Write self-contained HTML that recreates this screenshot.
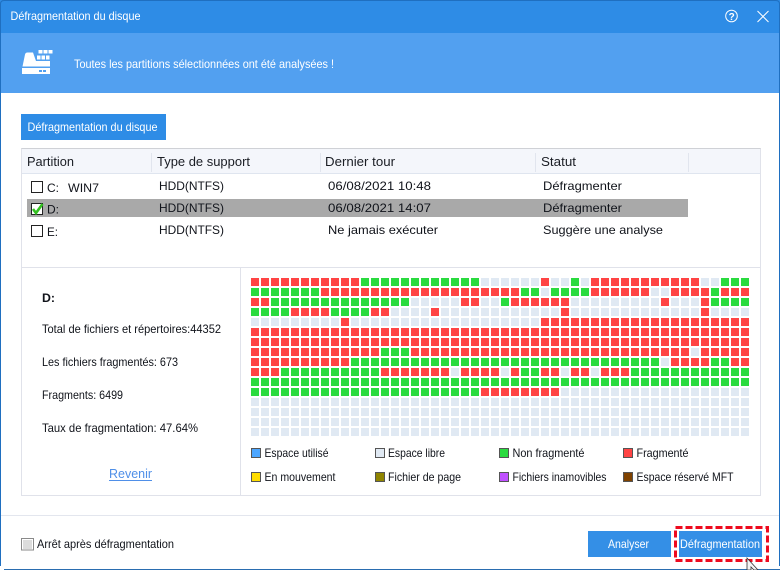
<!DOCTYPE html>
<html><head><meta charset="utf-8"><title>Défragmentation du disque</title>
<style>
html,body{margin:0;padding:0;background:#fff;width:780px;height:570px;overflow:hidden}
svg{display:block;position:absolute;left:0;top:0}
text{font-family:"Liberation Sans",sans-serif;font-size:12px;fill:#10131a}
.w{fill:#fff}
.h{font-size:13px;fill:#1a1d24}
</style></head><body>
<svg width="780" height="570" viewBox="0 0 780 570" xmlns="http://www.w3.org/2000/svg">
<rect width="780" height="570" fill="#fff"/>
<!-- title + banner -->
<rect x="0" y="0" width="780" height="33" fill="#2e8ce6"/>
<rect x="0" y="33" width="780" height="60" fill="#52a0f0"/>
<!-- window border -->
<path d="M0.5 566V4Q0.5 0.5 4 0.5H776Q779.5 .5 779.5 4V566" fill="none" stroke="#1f6fc0"/>
<path d="M4 569.5H747" stroke="#2a6db0" fill="none"/>
<path d="M758 569.5H780" stroke="#2a6db0" fill="none"/>
<text x="10.5" y="20" class="w" textLength="130" lengthAdjust="spacingAndGlyphs">Défragmentation du disque</text>
<!-- help + close -->
<circle cx="731.5" cy="16" r="5.8" fill="none" stroke="#fff" stroke-width="1"/>
<text x="728.6" y="19.8" class="w" style="font-size:10px;font-weight:bold">?</text>
<path d="M757.5 11L768.5 22M768.5 11L757.5 22" stroke="#fff" stroke-width="1" fill="none"/>
<!-- banner icon -->
<path d="M22.500 66.500L25 54.500Q25.500 52.500 27.500 52.500H33L36 61H50V66.500Z" fill="#fff"/>
<rect x="22" y="68" width="28" height="6" fill="#fff"/>
<rect x="39" y="70" width="3" height="2" fill="#52a0f0"/><rect x="43" y="70" width="3" height="2" fill="#52a0f0"/>
<path d="M38.500 50h4v3.500h-4zM43.500 50h4v3.500h-4zM48.500 50h4v3.500h-4zM37 55.500h3.500v4h-3.500zM41.500 55.500h3.500v4h-3.500zM46 55.500h3.500v4h-3.500z" fill="#fff"/>
<text x="74" y="68" class="w" textLength="260" lengthAdjust="spacingAndGlyphs">Toutes les partitions sélectionnées ont été analysées !</text>
<!-- tab button -->
<rect x="21" y="114" width="145" height="26" fill="#2e8ce6"/>
<text x="27.500" y="131" class="w" textLength="130" lengthAdjust="spacingAndGlyphs">Défragmentation du disque</text>
<!-- table frame -->
<rect x="21.500" y="148.500" width="739" height="347" fill="#fff" stroke="#e0e2ea"/>
<rect x="22" y="149" width="738" height="24" fill="#f4f6fb"/>
<path d="M22 173.500H760" stroke="#dfe5ef"/>
<path d="M151.500 153V172M320.500 153V172M535.500 153V172M688.500 153V172" stroke="#e1e5ee"/>
<path d="M21.500 148.500H760.500" stroke="#cfd1d6"/>
<text x="27" y="166" class="h" textLength="47" lengthAdjust="spacingAndGlyphs">Partition</text>
<text x="157" y="166" class="h" textLength="93" lengthAdjust="spacingAndGlyphs">Type de support</text>
<text x="325" y="166" class="h" textLength="70" lengthAdjust="spacingAndGlyphs">Dernier tour</text>
<text x="541" y="166" class="h" textLength="35" lengthAdjust="spacingAndGlyphs">Statut</text>
<!-- selected row -->
<rect x="27" y="199" width="661" height="18" fill="#a9a9a9"/>
<!-- checkboxes -->
<rect x="31.500" y="181.500" width="11" height="11" fill="#fff" stroke="#222"/>
<rect x="31.500" y="203.500" width="11" height="11" fill="#fff" stroke="#222"/>
<path d="M33 209L36 213L42.500 204" fill="none" stroke="#33c020" stroke-width="2.600"/>
<rect x="31.500" y="225.500" width="11" height="11" fill="#fff" stroke="#222"/>
<!-- rows -->
<text x="47" y="192" textLength="12" lengthAdjust="spacingAndGlyphs">C:</text>
<text x="68" y="192" textLength="31" lengthAdjust="spacingAndGlyphs">WIN7</text>
<text x="159" y="190" textLength="65" lengthAdjust="spacingAndGlyphs">HDD(NTFS)</text>
<text x="328" y="190" textLength="103" lengthAdjust="spacingAndGlyphs">06/08/2021 10:48</text>
<text x="543" y="190" textLength="79" lengthAdjust="spacingAndGlyphs">Défragmenter</text>
<text x="47" y="213.500" textLength="12" lengthAdjust="spacingAndGlyphs">D:</text>
<text x="159" y="212" textLength="65" lengthAdjust="spacingAndGlyphs">HDD(NTFS)</text>
<text x="328" y="212" textLength="103" lengthAdjust="spacingAndGlyphs">06/08/2021 14:07</text>
<text x="543" y="212" textLength="79" lengthAdjust="spacingAndGlyphs">Défragmenter</text>
<text x="47" y="236" textLength="11" lengthAdjust="spacingAndGlyphs">E:</text>
<text x="159" y="234" textLength="65" lengthAdjust="spacingAndGlyphs">HDD(NTFS)</text>
<text x="328" y="234" textLength="110" lengthAdjust="spacingAndGlyphs">Ne jamais exécuter</text>
<text x="543" y="234" textLength="120" lengthAdjust="spacingAndGlyphs">Suggère une analyse</text>
<!-- lower panel -->
<path d="M22 267.500H760M240.500 268V495" stroke="#e0e2ea"/>
<text x="42" y="302" style="font-weight:bold" textLength="13" lengthAdjust="spacingAndGlyphs">D:</text>
<text x="42" y="333" textLength="179" lengthAdjust="spacingAndGlyphs">Total de fichiers et répertoires:44352</text>
<text x="42" y="366" textLength="136" lengthAdjust="spacingAndGlyphs">Les fichiers fragmentés: 673</text>
<text x="42" y="399" textLength="81" lengthAdjust="spacingAndGlyphs">Fragments: 6499</text>
<text x="42" y="432" textLength="156" lengthAdjust="spacingAndGlyphs">Taux de fragmentation: 47.64%</text>
<text x="109" y="478" style="font-size:13px;fill:#4f8fe8" textLength="43" lengthAdjust="spacingAndGlyphs">Revenir</text>
<path d="M109 480.500H152" stroke="#4f8fe8"/>
<!-- block map -->
<g fill="none" stroke-width="8" stroke-dasharray="8 2">
<path stroke="#e0e9f3" d="M251 282h498M251 292h498M251 302h498M251 312h498M251 322h498M251 352h498M251 362h498M251 372h498M251 392h498M251 402h498M251 412h498M251 422h498M251 432h498"/>
<path stroke="#ff4444" d="M251 282h108M541 282h8M591 282h108M321 292h198M591 292h58M671 292h38M721 292h28M251 302h18M461 302h18M511 302h58M661 302h8M701 302h8M291 312h38M371 312h18M431 312h8M561 312h8M701 312h8M341 322h8M541 322h208M251 332h498M251 342h498M251 352h128M411 352h278M701 352h48M251 362h98M671 362h38M731 362h18M251 372h28M381 372h68M461 372h38M511 372h8M541 372h18M571 372h18M601 372h28M481 392h78"/>
<path stroke="#2adb3f" d="M361 282h118M571 282h8M721 282h28M251 292h68M521 292h18M551 292h38M711 292h8M271 302h138M501 302h8M711 302h38M251 312h38M331 312h38M381 352h28M351 362h308M711 362h18M281 372h98M521 372h18M631 372h118M251 382h498M251 392h228"/>
</g>
<!-- legend -->
<g stroke="#555" stroke-width="1">
<rect x="251.500" y="448.500" width="9" height="9" fill="#4ca6ff"/>
<rect x="375.500" y="448.500" width="9" height="9" fill="#e0e9f3"/>
<rect x="499.500" y="448.500" width="9" height="9" fill="#2adb3f"/>
<rect x="623.500" y="448.500" width="9" height="9" fill="#ff4444"/>
<rect x="251.500" y="472.500" width="9" height="9" fill="#ffdd00"/>
<rect x="375.500" y="472.500" width="9" height="9" fill="#8f8400"/>
<rect x="499.500" y="472.500" width="9" height="9" fill="#c050ff"/>
<rect x="623.500" y="472.500" width="9" height="9" fill="#7f4200"/>
</g>
<text x="264.500" y="457" textLength="64" lengthAdjust="spacingAndGlyphs">Espace utilisé</text>
<text x="388" y="457" textLength="57" lengthAdjust="spacingAndGlyphs">Espace libre</text>
<text x="512.500" y="457" textLength="72" lengthAdjust="spacingAndGlyphs">Non fragmenté</text>
<text x="636.500" y="457" textLength="52" lengthAdjust="spacingAndGlyphs">Fragmenté</text>
<text x="264.500" y="481" textLength="71" lengthAdjust="spacingAndGlyphs">En mouvement</text>
<text x="388" y="481" textLength="73" lengthAdjust="spacingAndGlyphs">Fichier de page</text>
<text x="512.500" y="481" textLength="94" lengthAdjust="spacingAndGlyphs">Fichiers inamovibles</text>
<text x="636.500" y="481" textLength="97" lengthAdjust="spacingAndGlyphs">Espace réservé MFT</text>
<!-- footer -->
<path d="M1 515.500H779" stroke="#e3e6ee"/>
<rect x="21.500" y="538.500" width="12" height="11.500" fill="#fff" stroke="#8a8a8a"/>
<rect x="23" y="540" width="9" height="9" fill="#dcdcdc"/>
<text x="37" y="548" textLength="137" lengthAdjust="spacingAndGlyphs">Arrêt après défragmentation</text>
<rect x="588" y="531" width="83" height="26" fill="#348fe6"/>
<text x="608" y="548" class="w" textLength="41" lengthAdjust="spacingAndGlyphs">Analyser</text>
<rect x="679" y="531" width="83" height="26" fill="#348fe6"/>
<text x="680" y="548" class="w" textLength="80" lengthAdjust="spacingAndGlyphs">Défragmentation</text>
<rect x="675.500" y="527.500" width="92" height="33" fill="none" stroke="#ee0a1e" stroke-width="3" stroke-dasharray="7 3"/>
<!-- cursor -->
<path d="M747 558V570H751V567L754 570H758Z" fill="#f4f4f4" stroke="#333" stroke-width="0.800"/>
</svg>
</body></html>
